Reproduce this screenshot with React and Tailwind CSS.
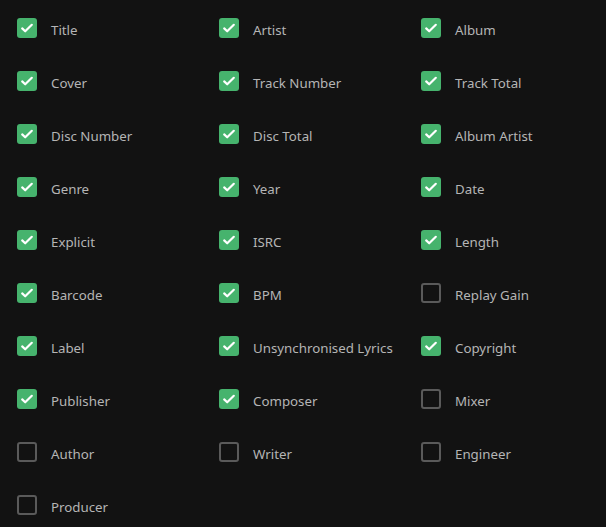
import React, { useState } from 'react';

const FIELDS = [
  ['Title', true], ['Artist', true], ['Album', true],
  ['Cover', true], ['Track Number', true], ['Track Total', true],
  ['Disc Number', true], ['Disc Total', true], ['Album Artist', true],
  ['Genre', true], ['Year', true], ['Date', true],
  ['Explicit', true], ['ISRC', true], ['Length', true],
  ['Barcode', true], ['BPM', true], ['Replay Gain', false],
  ['Label', true], ['Unsynchronised Lyrics', true], ['Copyright', true],
  ['Publisher', true], ['Composer', true], ['Mixer', false],
  ['Author', false], ['Writer', false], ['Engineer', false],
  ['Producer', false],
];

const Check = ({ label, checked, onToggle }) => (
  <button onClick={onToggle} className="flex items-center h-[53px] gap-[14px] text-left">
    {checked ? (
      <span className="flex h-5 w-5 items-center justify-center rounded-[3px] bg-[#46b36d]">
        <svg className="h-4 w-4" viewBox="0 0 16 16" fill="none">
          <path d="M3.2 8.4l3 2.9L12.8 4.8" stroke="#fff" strokeWidth="2.2" strokeLinecap="round" strokeLinejoin="round" />
        </svg>
      </span>
    ) : (
      <span className="h-5 w-5 rounded-[3px] border-2 border-[#5a5a5a]" />
    )}
    <span className="mt-[6px] text-[13.3px] text-[#b5b5b5]">{label}</span>
  </button>
);

export default function App() {
  const [state, setState] = useState(FIELDS.map(f => f[1]));
  return (
    <div className="min-h-screen bg-[#121212] pl-[17px] pt-[1px]" style={{ fontFamily: '"Noto Sans", "Open Sans", sans-serif' }}>
      <div className="grid grid-cols-[202px_202px_202px]">
        {FIELDS.map(([label], i) => (
          <Check
            key={label}
            label={label}
            checked={state[i]}
            onToggle={() => setState(s => s.map((v, j) => (j === i ? !v : v)))}
          />
        ))}
      </div>
    </div>
  );
}
